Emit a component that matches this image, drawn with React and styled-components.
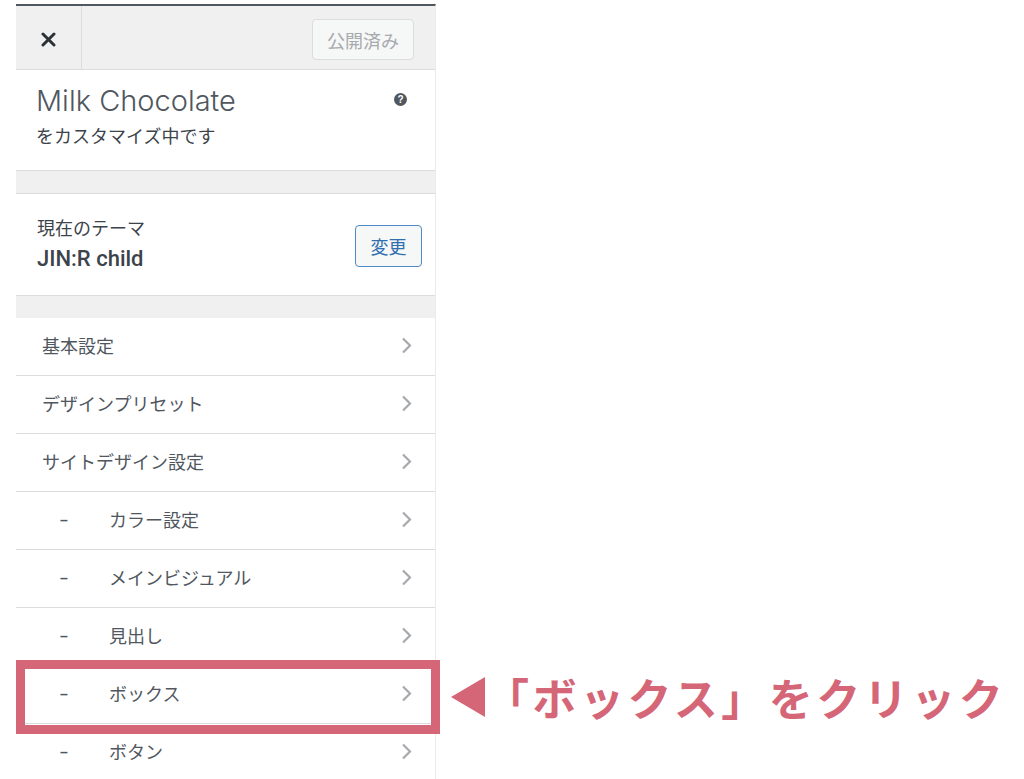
import React from "react";
import styled, { createGlobalStyle } from "styled-components";

const GlobalStyle = createGlobalStyle`
  body {
    margin: 0;
    background: #fff;
    font-family: "Liberation Sans", "Noto Sans CJK JP", sans-serif;
  }
`;

const Page = styled.div`
  display: flex;
  padding-left: 16px;
  height: 779px;
  overflow: hidden;
`;

const Panel = styled.div`
  width: 420px;
  margin-top: 4px;
  border-top: 2px solid #50575e;
  border-right: 1px solid #eeeae4;
  box-sizing: border-box;
  background: #fff;
`;

const Header = styled.div`
  display: flex;
  align-items: center;
  height: 63px;
  background: #f0f0f1;
  border-bottom: 1px solid #dcdcde;
`;

const CloseButton = styled.div`
  width: 66px;
  height: 100%;
  display: flex;
  align-items: center;
  justify-content: center;
  padding-top: 4px;
  box-sizing: border-box;
  border-right: 1px solid #dcdcde;
`;

const PublishButton = styled.div`
  margin-left: auto;
  margin-right: 21px;
  margin-top: 4px;
  width: 102px;
  height: 41px;
  box-sizing: border-box;
  border: 1px solid #dcdcde;
  border-radius: 4px;
  background: #f6f7f7;
  color: #a7aaad;
  font-size: 18px;
  display: flex;
  align-items: center;
  justify-content: center;
`;

const InfoSection = styled.div`
  position: relative;
  height: 101px;
  padding: 13px 20px 0 20px;
  box-sizing: border-box;
  border-bottom: 1px solid #dcdcde;
`;

const Title = styled.div`
  font-family: "Inter", "Liberation Sans", sans-serif;
  font-size: 29px;
  font-weight: 300;
  line-height: 36px;
  color: #50575e;
`;

const Subtitle = styled.div`
  margin-top: 5px;
  font-size: 18px;
  line-height: 26px;
  color: #3c434a;
`;

const HelpIcon = styled.span`
  position: absolute;
  top: 23px;
  right: 28px;
  width: 13px;
  height: 13px;
  border-radius: 50%;
  background: #50575e;
  color: #fff;
  font-size: 10px;
  font-weight: 700;
  line-height: 13px;
  text-align: center;
`;

const Spacer = styled.div`
  height: 22px;
  background: #f0f0f1;
  border-bottom: ${(p) => (p.$line ? "1px solid #dcdcde" : "none")};
`;

const ThemeSection = styled.div`
  display: flex;
  align-items: center;
  justify-content: space-between;
  height: 102px;
  padding: 0 13px 0 21px;
  box-sizing: border-box;
  border-bottom: 1px solid #dcdcde;
`;

const ThemeLabel = styled.div`
  font-size: 18px;
  line-height: 26px;
  color: #3c434a;
`;

const ThemeName = styled.div`
  margin-top: 3px;
  font-family: "Roboto", "Liberation Sans", sans-serif;
  font-size: 22px;
  line-height: 28px;
  font-weight: 500;
  color: #3c434a;
`;

const ChangeButton = styled.div`
  margin-top: 3px;
  width: 67px;
  height: 42px;
  box-sizing: border-box;
  border: 1px solid #4f8ac6;
  border-radius: 4px;
  background: #f6f7f7;
  color: #2f6fb0;
  font-size: 18px;
  display: flex;
  align-items: center;
  justify-content: center;
`;

const MenuList = styled.div`
  display: flex;
  flex-direction: column;
`;

const MenuRow = styled.div`
  position: relative;
  display: flex;
  align-items: center;
  height: 58px;
  padding: 0 23px 3px 26px;
  box-sizing: border-box;
  border-bottom: 1px solid #dcdcde;
  font-size: 18px;
  color: #50575e;
`;

const Dash = styled.span`
  width: 67px;
  padding-left: 18px;
  padding-top: 2px;
  box-sizing: border-box;
  font-size: 14px;
  font-weight: 700;
  color: #50575e;
`;

const Label = styled.span`
  flex: 1;
`;

const Highlight = styled.div`
  position: absolute;
  top: -6px;
  left: 0;
  right: -5px;
  bottom: -11px;
  border: 9px solid #d56677;
  pointer-events: none;
`;

const Callout = styled.div`
  position: absolute;
  left: calc(100% + 20px);
  top: 50%;
  transform: translateY(-50%);
  display: flex;
  align-items: center;
  white-space: nowrap;
`;

const Arrow = styled.div`
  width: 0;
  height: 0;
  border-top: 20px solid transparent;
  border-bottom: 20px solid transparent;
  border-right: 34px solid #d56677;
`;

const CalloutText = styled.span`
  font-family: "Noto Sans CJK JP", sans-serif;
  font-size: 44px;
  font-weight: 700;
  letter-spacing: 3.5px;
  color: #d56677;
`;

const CloseIcon = () => (
  <svg width="15" height="15" viewBox="0 0 15 15">
    <path d="M2 2 L13 13 M13 2 L2 13" stroke="#2c3338" strokeWidth="3" strokeLinecap="round" />
  </svg>
);

const ChevronIcon = () => (
  <svg width="11" height="17" viewBox="0 0 11 17">
    <polyline points="2,1.5 9,8.5 2,15.5" fill="none" stroke="#a7aaad" strokeWidth="2.2" />
  </svg>
);

const items = [
  { label: "基本設定" },
  { label: "デザインプリセット" },
  { label: "サイトデザイン設定" },
  { label: "カラー設定", sub: true },
  { label: "メインビジュアル", sub: true },
  { label: "見出し", sub: true },
  { label: "ボックス", sub: true, highlight: true },
  { label: "ボタン", sub: true },
];

const App = () => {
  return (
    <Page>
      <GlobalStyle />
      <Panel>
        <Header>
          <CloseButton>
            <CloseIcon />
          </CloseButton>
          <PublishButton>公開済み</PublishButton>
        </Header>

        <InfoSection>
          <Title>Milk Chocolate</Title>
          <Subtitle>をカスタマイズ中です</Subtitle>
          <HelpIcon>?</HelpIcon>
        </InfoSection>

        <Spacer $line />

        <ThemeSection>
          <div>
            <ThemeLabel>現在のテーマ</ThemeLabel>
            <ThemeName>JIN:R child</ThemeName>
          </div>
          <ChangeButton>変更</ChangeButton>
        </ThemeSection>

        <Spacer />

        <MenuList>
          {items.map((item) => (
            <MenuRow key={item.label}>
              {item.sub && <Dash>–</Dash>}
              <Label>{item.label}</Label>
              <ChevronIcon />
              {item.highlight && (
                <Highlight>
                  <Callout>
                    <Arrow />
                    <CalloutText>「ボックス」をクリック</CalloutText>
                  </Callout>
                </Highlight>
              )}
            </MenuRow>
          ))}
        </MenuList>
      </Panel>
    </Page>
  );
};

export default App;
